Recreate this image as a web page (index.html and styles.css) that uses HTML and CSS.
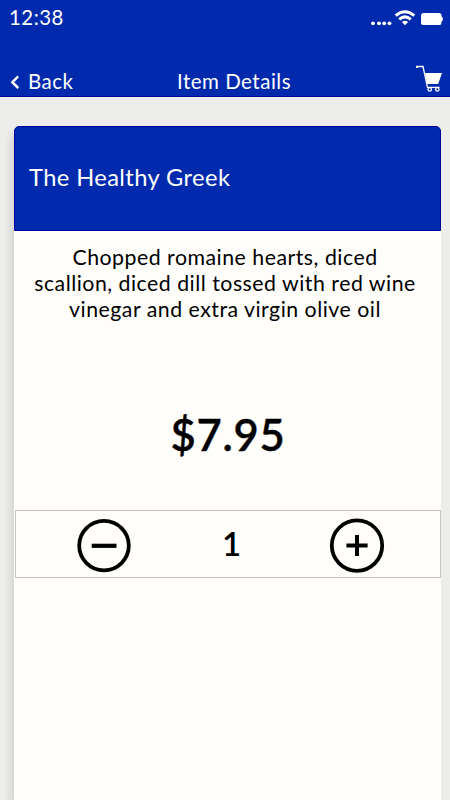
FILE: index.html
```html
<!DOCTYPE html>
<html lang="en">
<head>
<meta charset="utf-8">
<title>Item Details</title>
<link rel="stylesheet" href="styles.css">
</head>
<body>
<header class="top">
  <div class="status">
    <span class="time">12:38</span>
    <svg class="status-icons" width="74" height="18" viewBox="0 0 74 18" fill="#fff">
      <circle cx="3" cy="14.3" r="1.9"/><circle cx="9" cy="14.3" r="1.9"/><circle cx="14.2" cy="14.3" r="1.9"/><circle cx="19.5" cy="14.3" r="1.9"/>
      <g fill="none" stroke="#fff" stroke-width="3"><path d="M25.7 6.6Q35 -1.1 44.3 6.6"/><path d="M29.2 10.4Q35 5.4 40.8 10.4"/></g>
      <path d="M31.9 12.9Q35 10.4 38.1 12.9L35 16.2Z"/>
      <rect x="51" y="4" width="20.5" height="12" rx="2.6"/><path d="M71 7.2q2 .5 2 2.8t-2 2.8z"/>
    </svg>
  </div>
  <nav class="nav">
    <a class="back"><svg width="10" height="14" viewBox="0 0 10 14" fill="none" stroke="#fff" stroke-width="2.5"><path d="M9.2 1.4L3.4 7.2L9.2 13"/></svg><span class="back-label">Back</span></a>
    <h1 class="title">Item Details</h1>
    <svg class="cart" width="28" height="28" viewBox="0 0 28 28">
      <path d="M9 8H26L22.2 19H11.2Z" fill="#fff"/>
      <g fill="none" stroke="#fff"><path d="M.3 1.5H7L11.5 22.3H23.5" stroke-width="1.3"/><circle cx="13.7" cy="24.4" r="1.7" stroke-width="1.3"/><circle cx="21.3" cy="24.4" r="1.7" stroke-width="1.3"/></g>
      <path d="M0 1h2v2H0z" fill="#fff"/>
    </svg>
  </nav>
</header>
<main class="card">
  <h2 class="name">The Healthy Greek</h2>
  <p class="desc">Chopped romaine hearts, diced<br>scallion, diced dill tossed with red wine<br>vinegar and extra virgin olive oil</p>
  <div class="price">$7.95</div>
  <div class="stepper">
    <svg width="56" height="56" viewBox="0 0 56 56" fill="none" stroke="#000"><circle cx="28" cy="28.6" r="24.8" stroke-width="3.8"/><path d="M15.7 28.8H40.5" stroke-width="4.2"/></svg>
    <span class="qty">1</span>
    <svg width="56" height="56" viewBox="0 0 56 56" fill="none" stroke="#000"><circle cx="28" cy="28.6" r="25.2" stroke-width="3.8"/><path d="M17.4 28.6H38.6M28 18.1V38.9" stroke-width="4"/></svg>
  </div>
</main>
</body>
</html>
```
FILE: styles.css
```css
* { box-sizing: border-box; margin: 0; padding: 0; }
body {
  width: 450px;
  height: 800px;
  overflow: hidden;
  display: flex;
  flex-direction: column;
  background: #ededec;
  font-family: Lato, "Liberation Sans", sans-serif;
}
.top {
  flex: none;
  height: 97px;
  background: #002aad;
  border-bottom: 1px solid #0000a0;
  color: #fff;
}
.status {
  display: flex;
  justify-content: space-between;
  height: 60px;
  padding: 9px 6px 0 9px;
}
.time { font-size: 20.4px; line-height: 17px; letter-spacing: .5px; }
.nav {
  display: grid;
  grid-template-columns: 168px 132px 1fr;
  padding: 5px 6px 0 9px;
}
.back { display: flex; align-items: center; height: 34px; }
.back-label, .title { font-size: 20.5px; line-height: 32px; height: 34px; font-weight: 400; letter-spacing: .5px; }
.back-label { margin-left: 9px; }
.title { white-space: nowrap; }
.cart { justify-self: end; }
.card {
  flex: 1;
  margin: 29px 9px 0 14px;
  background: #fffefb;
  border-radius: 5px 5px 0 0;
  box-shadow: -5px 6px 8px -2px rgba(0, 0, 0, .12);
}
.name {
  height: 105px;
  padding-left: 14px;
  border: 1px solid #0000a0;
  border-radius: 5px 5px 0 0;
  background: #002aad;
  color: #fff;
  font-size: 23.7px;
  font-weight: 400;
  line-height: 101px;
  letter-spacing: .4px;
}
.desc {
  height: 158px;
  padding: 13px 5px 0 0;
  font-size: 21.3px;
  line-height: 26px;
  letter-spacing: .5px;
  text-align: center;
  white-space: nowrap;
  color: #000;
}
.price {
  height: 121px;
  padding-left: 1px;
  font-size: 43.5px;
  font-weight: 600;
  line-height: 91px;
  letter-spacing: .8px;
  text-align: center;
  -webkit-text-stroke: .4px #000;
}
.stepper {
  display: flex;
  justify-content: space-between;
  align-items: center;
  height: 68px;
  margin-left: 1px;
  padding: 2px 55px 0 60px;
  border: 1px solid #c6c6c5;
}
.qty { font-size: 33px; font-weight: 600; line-height: 60px; padding: 0 0 4px 2px; }
```
